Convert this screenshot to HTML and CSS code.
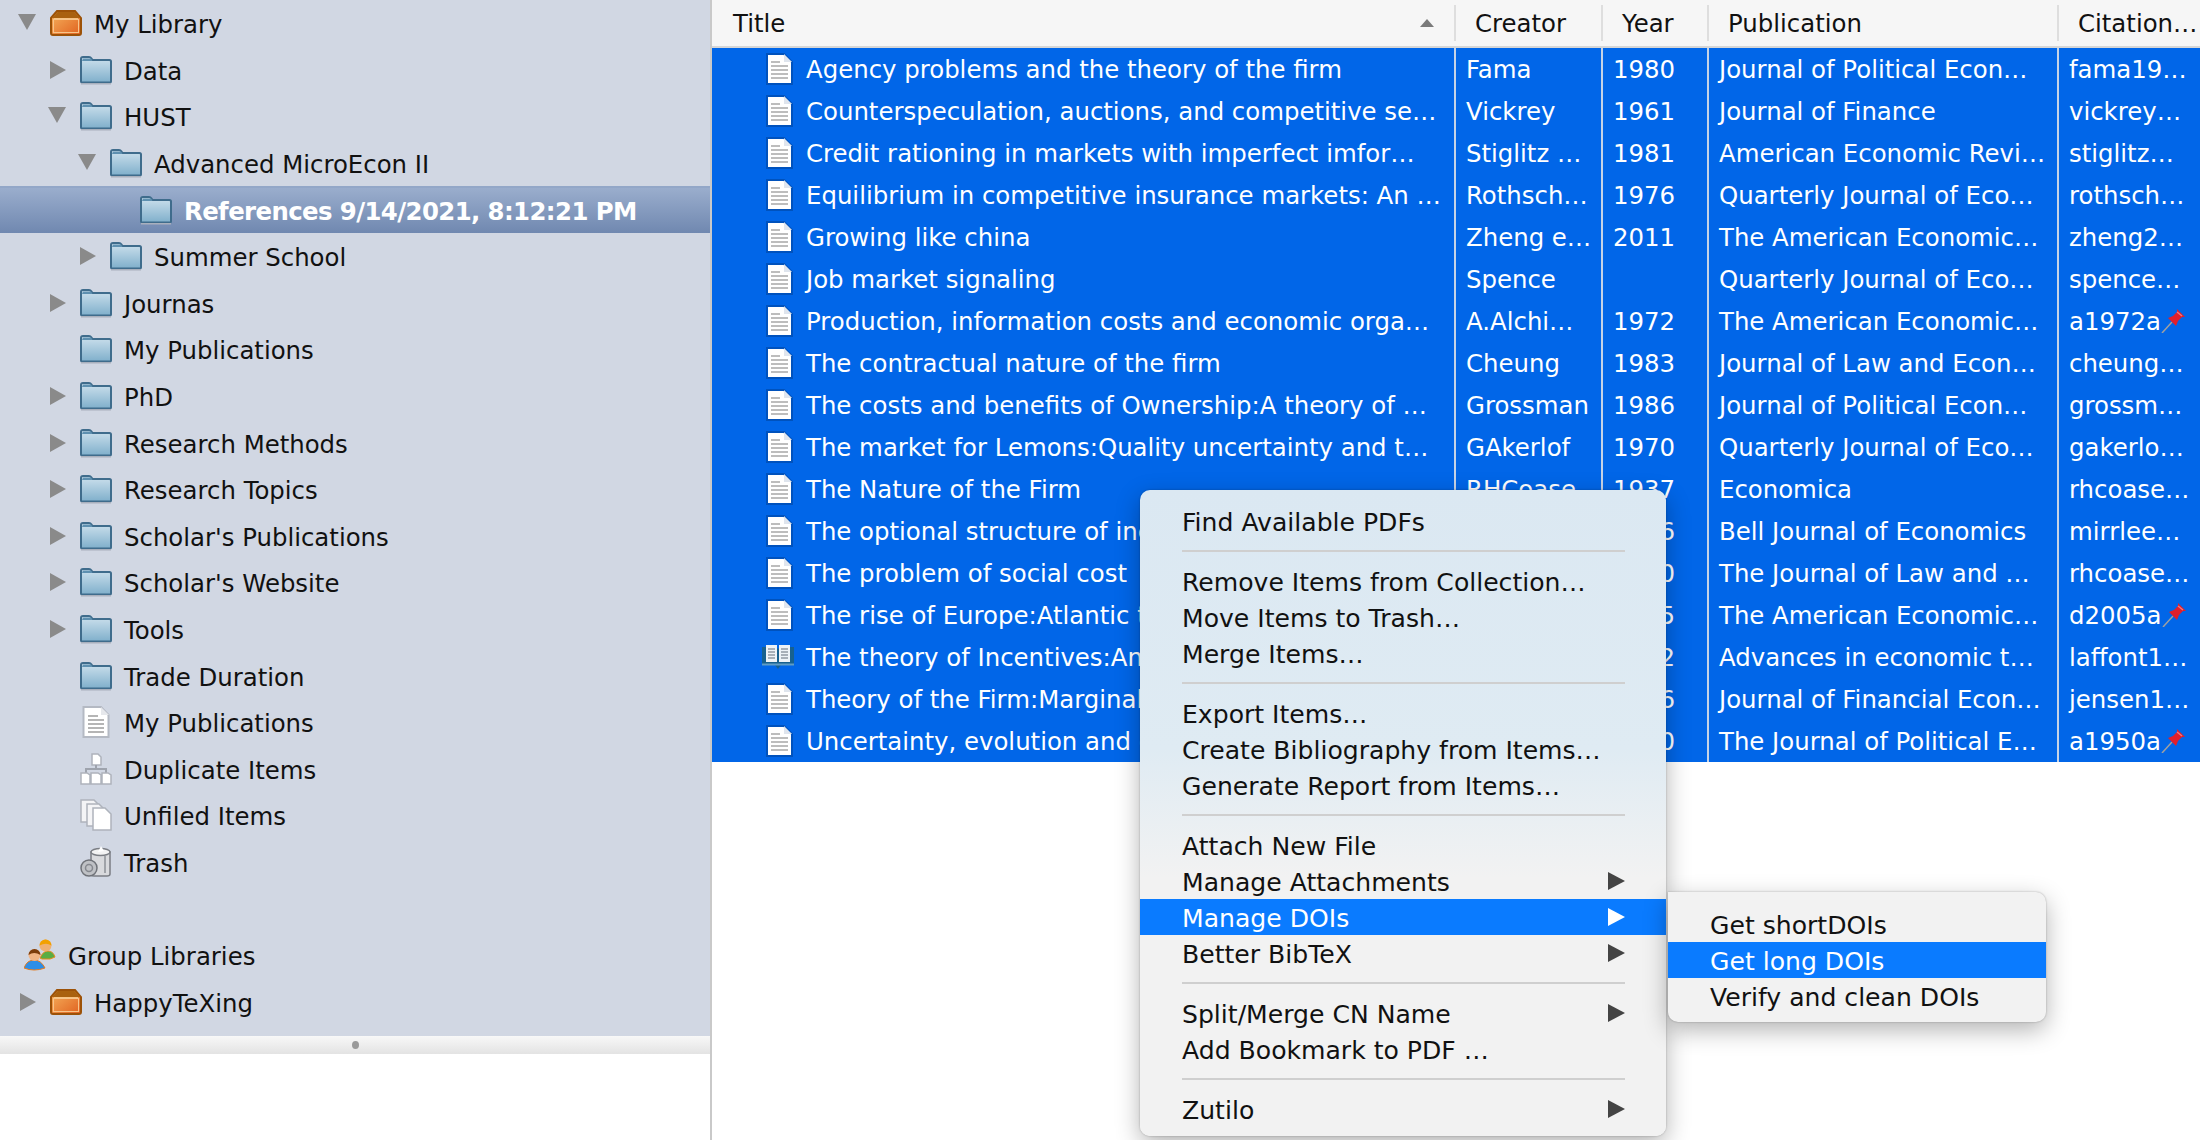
FILE: index.html
```html
<!DOCTYPE html>
<html lang="en">

<head>
    <meta charset="UTF-8">
    <title>Zotero</title>
    <link rel="stylesheet" href="styles.css">
</head>

<body>
    <!-- Shared icons -->
    <svg class="icon-defs" width="0" height="0">
        <defs>
            <linearGradient id="folder-fill" x1="0" y1="0" x2="0" y2="1">
                <stop offset="0" stop-color="#cfe2ee" />
                <stop offset="1" stop-color="#7fafcb" />
            </linearGradient>
            <linearGradient id="box-fill" x1="0" y1="0" x2="1" y2="1">
                <stop offset="0" stop-color="#f6b45f" />
                <stop offset="1" stop-color="#e0601e" />
            </linearGradient>
            <symbol id="i-folder" viewBox="0 0 32 29">
                <path d="M1 26V3.500Q1 1.500 3 1.500H9Q10.500 1.500 11.500 3L12.500 4.500H29.500Q31 4.500 31 6V26Q31 27 30 27H2Q1 27 1 26Z" fill="url(#folder-fill)" stroke="#3f6c8c" stroke-width="2" />
                <path d="M2 5.500H12.500L11 3H3Z" fill="#5e90b0" />
                <rect x="1" y="27.500" width="30" height="1.500" fill="#a9b0bd" />
            </symbol>
            <symbol id="i-box" viewBox="0 0 32 26">
                <path d="M1 8L7 1H25L31 8V23Q31 25 29 25H3Q1 25 1 23Z" fill="url(#box-fill)" stroke="#9c5208" stroke-width="2" />
                <path d="M2 8L7.500 2H24.500L30 8Z" fill="#a9610f" />
                <path d="M4 9H28" stroke="#f8d39a" stroke-width="1.500" />
                <rect x="3.500" y="9.500" width="25" height="13" fill="none" stroke="#f7c58a" stroke-width="1" />
            </symbol>
            <symbol id="i-doc" viewBox="0 0 28 32">
                <path d="M2 1H19L27 9V31H2Z" fill="#fff" stroke="#0052bd" stroke-width="2" />
                <path d="M19 1V9H27" fill="#dfe5ee" />
                <path d="M6 9H15M6 13H23M6 17H23M6 21H23M6 25H23" stroke="#bdbdbd" stroke-width="2" />
            </symbol>
            <symbol id="i-doc-plain" viewBox="0 0 28 32">
                <path d="M1.500 1H19L26.500 9V31H1.500Z" fill="#fff" stroke="#b4b9c3" stroke-width="2" />
                <path d="M19 1V9H27" fill="#e6e8ec" />
                <path d="M6 10H16M6 14H22M6 18H22M6 22H22M6 26H22" stroke="#b5b5b5" stroke-width="2" />
            </symbol>
            <symbol id="i-book" viewBox="0 0 32 26">
                <path d="M0 3H14L16 5L18 3H32V21H19L16 25L13 21H0Z" fill="#17618f" />
                <path d="M4 1H15V18H4ZM17 1H28V18H17Z" fill="#eef3f7" />
                <path d="M6 5H13M6 8H13M6 11H13M6 14H13M19 5H26M19 8H26M19 11H26M19 14H26" stroke="#a8b0b8" stroke-width="2" />
                <path d="M0 20.500H32" stroke="#5f9cc4" stroke-width="2" />
            </symbol>
            <symbol id="i-dup" viewBox="0 0 32 32">
                <path d="M12 1H18L21 4V12H12Z" fill="#fff" stroke="#aeb3bc" stroke-width="1.500" />
                <path d="M16 12V16M6 20V16H26V20" fill="none" stroke="#9ea3ad" stroke-width="2" />
                <path d="M1 20H7L10 22V31H1ZM11 20H18L21 22V31H11ZM22 20H28L31 22V31H22Z" fill="#fff" stroke="#aeb3bc" stroke-width="1.500" />
            </symbol>
            <symbol id="i-unfiled" viewBox="0 0 32 32">
                <path d="M1 1H14L19 6V23H1Z" fill="#f4f4f6" stroke="#aeb3bc" stroke-width="1.500" />
                <path d="M7 5H19L24 10V27H7Z" fill="#f4f4f6" stroke="#aeb3bc" stroke-width="1.500" />
                <path d="M13 9H25L31 15V31H13Z" fill="#fff" stroke="#aeb3bc" stroke-width="1.500" />
            </symbol>
            <symbol id="i-trash" viewBox="0 0 32 32">
                <path d="M11 6H30V28Q30 30 27 30H14Q11 30 11 28Z" fill="#d9dadd" stroke="#7b7e84" stroke-width="1.500" />
                <ellipse cx="20.500" cy="6" rx="9.500" ry="3.500" fill="#f3f3f3" stroke="#7b7e84" stroke-width="1.500" />
                <path d="M18 6L21 0L24 5Z" fill="#fff" />
                <path d="M25 10V27" stroke="#8d9096" stroke-width="1.500" />
                <circle cx="9" cy="22" r="8" fill="#bfc1c5" stroke="#6f7278" stroke-width="1.500" />
                <circle cx="9" cy="22" r="3.500" fill="none" stroke="#85888e" stroke-width="1.500" />
            </symbol>
            <symbol id="i-group" viewBox="0 0 32 32">
                <path d="M16 19Q19 12 24 12Q29 12 31 18L26 20H18Z" fill="#58ad44" stroke="#e88a1a" stroke-width="1" />
                <circle cx="21.500" cy="6.500" r="6" fill="#f0b070" />
                <path d="M15.500 6.500A6 6 0 0 1 27.500 6.500Q22 3 15.500 6.500Z" fill="#f2a100" />
                <path d="M0 29Q3 21 10 21Q17 21 21 29Q10 33 0 29Z" fill="#2d8ee6" stroke="#e87a1a" stroke-width="1" />
                <circle cx="10.500" cy="16" r="6" fill="#f1b484" />
                <path d="M4.500 16A6 6 0 0 1 16.500 16Q10 12 4.500 16Z" fill="#7c3d0c" />
            </symbol>
            <symbol id="i-pin" viewBox="0 0 24 24">
                <path d="M1 24L11 13" stroke="#a0a0a0" stroke-width="1.500" />
                <path d="M7 9L15 17L17 12L21 8L24 8L16 0L16 3L12 7Z" fill="#e01f2b" />
                <path d="M16 3L21 7" stroke="#f4777c" stroke-width="1.500" />
            </symbol>
        </defs>
    </svg>

    <div class="app">
        <aside class="sidebar">
            <div class="tree">
                <div class="tree-row"><span class="twisty twisty-open"></span><svg class="tree-icon"><use href="#i-box" /></svg><span>My Library</span></div>
                <div class="tree-row level-1"><span class="twisty"></span><svg class="tree-icon"><use href="#i-folder" /></svg><span>Data</span></div>
                <div class="tree-row level-1"><span class="twisty twisty-open"></span><svg class="tree-icon"><use href="#i-folder" /></svg><span>HUST</span></div>
                <div class="tree-row level-2"><span class="twisty twisty-open"></span><svg class="tree-icon"><use href="#i-folder" /></svg><span>Advanced MicroEcon II</span></div>
                <div class="tree-row level-3 tree-row-selected"><span class="twisty twisty-none"></span><svg class="tree-icon"><use href="#i-folder" /></svg><span>References 9/14/2021, 8:12:21 PM</span></div>
                <div class="tree-row level-2"><span class="twisty"></span><svg class="tree-icon"><use href="#i-folder" /></svg><span>Summer School</span></div>
                <div class="tree-row level-1"><span class="twisty"></span><svg class="tree-icon"><use href="#i-folder" /></svg><span>Journas</span></div>
                <div class="tree-row level-1"><span class="twisty twisty-none"></span><svg class="tree-icon"><use href="#i-folder" /></svg><span>My Publications</span></div>
                <div class="tree-row level-1"><span class="twisty"></span><svg class="tree-icon"><use href="#i-folder" /></svg><span>PhD</span></div>
                <div class="tree-row level-1"><span class="twisty"></span><svg class="tree-icon"><use href="#i-folder" /></svg><span>Research Methods</span></div>
                <div class="tree-row level-1"><span class="twisty"></span><svg class="tree-icon"><use href="#i-folder" /></svg><span>Research Topics</span></div>
                <div class="tree-row level-1"><span class="twisty"></span><svg class="tree-icon"><use href="#i-folder" /></svg><span>Scholar's Publications</span></div>
                <div class="tree-row level-1"><span class="twisty"></span><svg class="tree-icon"><use href="#i-folder" /></svg><span>Scholar's Website</span></div>
                <div class="tree-row level-1"><span class="twisty"></span><svg class="tree-icon"><use href="#i-folder" /></svg><span>Tools</span></div>
                <div class="tree-row level-1"><span class="twisty twisty-none"></span><svg class="tree-icon"><use href="#i-folder" /></svg><span>Trade Duration</span></div>
                <div class="tree-row level-1"><span class="twisty twisty-none"></span><svg class="tree-icon"><use href="#i-doc-plain" /></svg><span>My Publications</span></div>
                <div class="tree-row level-1"><span class="twisty twisty-none"></span><svg class="tree-icon"><use href="#i-dup" /></svg><span>Duplicate Items</span></div>
                <div class="tree-row level-1"><span class="twisty twisty-none"></span><svg class="tree-icon"><use href="#i-unfiled" /></svg><span>Unfiled Items</span></div>
                <div class="tree-row level-1"><span class="twisty twisty-none"></span><svg class="tree-icon"><use href="#i-trash" /></svg><span>Trash</span></div>
                <div class="tree-row tree-spacer"></div>
                <div class="tree-row group-row"><svg class="tree-icon"><use href="#i-group" /></svg><span>Group Libraries</span></div>
                <div class="tree-row"><span class="twisty"></span><svg class="tree-icon"><use href="#i-box" /></svg><span>HappyTeXing</span></div>
            </div>
            <div class="splitter"><span class="splitter-dot"></span></div>
            <div class="sidebar-blank"></div>
        </aside>

        <main class="items">
            <div class="items-head">
                <div class="head-cell head-title">Title<span class="sort-arrow"></span></div>
                <div class="head-cell">Creator</div>
                <div class="head-cell">Year</div>
                <div class="head-cell">Publication</div>
                <div class="head-cell">Citation…</div>
            </div>

            <div class="items-body">
                <div class="item"><div class="cell cell-title"><svg class="doc"><use href="#i-doc" /></svg>Agency problems and the theory of the firm</div><div class="cell">Fama</div><div class="cell">1980</div><div class="cell">Journal of Political Econ…</div><div class="cell">fama19…</div></div>
                <div class="item"><div class="cell cell-title"><svg class="doc"><use href="#i-doc" /></svg>Counterspeculation, auctions, and competitive se…</div><div class="cell">Vickrey</div><div class="cell">1961</div><div class="cell">Journal of Finance</div><div class="cell">vickrey…</div></div>
                <div class="item"><div class="cell cell-title"><svg class="doc"><use href="#i-doc" /></svg>Credit rationing in markets with imperfect imfor…</div><div class="cell">Stiglitz …</div><div class="cell">1981</div><div class="cell">American Economic Revi…</div><div class="cell">stiglitz…</div></div>
                <div class="item"><div class="cell cell-title"><svg class="doc"><use href="#i-doc" /></svg>Equilibrium in competitive insurance markets: An …</div><div class="cell">Rothsch…</div><div class="cell">1976</div><div class="cell">Quarterly Journal of Eco…</div><div class="cell">rothsch…</div></div>
                <div class="item"><div class="cell cell-title"><svg class="doc"><use href="#i-doc" /></svg>Growing like china</div><div class="cell">Zheng e…</div><div class="cell">2011</div><div class="cell">The American Economic…</div><div class="cell">zheng2…</div></div>
                <div class="item"><div class="cell cell-title"><svg class="doc"><use href="#i-doc" /></svg>Job market signaling</div><div class="cell">Spence</div><div class="cell"></div><div class="cell">Quarterly Journal of Eco…</div><div class="cell">spence…</div></div>
                <div class="item"><div class="cell cell-title"><svg class="doc"><use href="#i-doc" /></svg>Production, information costs and economic orga…</div><div class="cell">A.Alchi…</div><div class="cell">1972</div><div class="cell">The American Economic…</div><div class="cell cell-pinned">a1972a<svg class="pin"><use href="#i-pin" /></svg></div></div>
                <div class="item"><div class="cell cell-title"><svg class="doc"><use href="#i-doc" /></svg>The contractual nature of the firm</div><div class="cell">Cheung</div><div class="cell">1983</div><div class="cell">Journal of Law and Econ…</div><div class="cell">cheung…</div></div>
                <div class="item"><div class="cell cell-title"><svg class="doc"><use href="#i-doc" /></svg>The costs and benefits of Ownership:A theory of …</div><div class="cell">Grossman</div><div class="cell">1986</div><div class="cell">Journal of Political Econ…</div><div class="cell">grossm…</div></div>
                <div class="item"><div class="cell cell-title"><svg class="doc"><use href="#i-doc" /></svg>The market for Lemons:Quality uncertainty and t…</div><div class="cell">GAkerlof</div><div class="cell">1970</div><div class="cell">Quarterly Journal of Eco…</div><div class="cell">gakerlo…</div></div>
                <div class="item"><div class="cell cell-title"><svg class="doc"><use href="#i-doc" /></svg>The Nature of the Firm</div><div class="cell">RHCoase</div><div class="cell">1937</div><div class="cell">Economica</div><div class="cell">rhcoase…</div></div>
                <div class="item"><div class="cell cell-title"><svg class="doc"><use href="#i-doc" /></svg>The optional structure of income taxation</div><div class="cell">Mirrlees</div><div class="cell">1976</div><div class="cell">Bell Journal of Economics</div><div class="cell">mirrlee…</div></div>
                <div class="item"><div class="cell cell-title"><svg class="doc"><use href="#i-doc" /></svg>The problem of social cost</div><div class="cell">RHCoase</div><div class="cell">1960</div><div class="cell">The Journal of Law and …</div><div class="cell">rhcoase…</div></div>
                <div class="item"><div class="cell cell-title"><svg class="doc"><use href="#i-doc" /></svg>The rise of Europe:Atlantic trade, institutional …</div><div class="cell">D.Acem…</div><div class="cell">2005</div><div class="cell">The American Economic…</div><div class="cell cell-pinned">d2005a<svg class="pin"><use href="#i-pin" /></svg></div></div>
                <div class="item"><div class="cell cell-title"><svg class="doc doc-book"><use href="#i-book" /></svg>The theory of Incentives:An overview</div><div class="cell">Laffont</div><div class="cell">1982</div><div class="cell">Advances in economic t…</div><div class="cell">laffont1…</div></div>
                <div class="item"><div class="cell cell-title"><svg class="doc"><use href="#i-doc" /></svg>Theory of the Firm:Marginal behavior</div><div class="cell">Jensen</div><div class="cell">1976</div><div class="cell">Journal of Financial Econ…</div><div class="cell">jensen1…</div></div>
                <div class="item"><div class="cell cell-title"><svg class="doc"><use href="#i-doc" /></svg>Uncertainty, evolution and economic theory</div><div class="cell">AAlchian</div><div class="cell">1950</div><div class="cell">The Journal of Political E…</div><div class="cell cell-pinned">a1950a<svg class="pin"><use href="#i-pin" /></svg></div></div>
            </div>
        </main>
    </div>

    <!-- Context menu -->
    <div class="menu context-menu">
        <div class="menu-item">Find Available PDFs</div>
        <div class="menu-sep"></div>
        <div class="menu-item">Remove Items from Collection…</div>
        <div class="menu-item">Move Items to Trash…</div>
        <div class="menu-item">Merge Items…</div>
        <div class="menu-sep"></div>
        <div class="menu-item">Export Items…</div>
        <div class="menu-item">Create Bibliography from Items…</div>
        <div class="menu-item">Generate Report from Items…</div>
        <div class="menu-sep"></div>
        <div class="menu-item">Attach New File</div>
        <div class="menu-item has-sub">Manage Attachments</div>
        <div class="menu-item has-sub menu-item-active">Manage DOIs</div>
        <div class="menu-item has-sub">Better BibTeX</div>
        <div class="menu-sep"></div>
        <div class="menu-item has-sub">Split/Merge CN Name</div>
        <div class="menu-item">Add Bookmark to PDF …</div>
        <div class="menu-sep"></div>
        <div class="menu-item has-sub">Zutilo</div>
    </div>

    <div class="menu sub-menu">
        <div class="menu-item">Get shortDOIs</div>
        <div class="menu-item menu-item-active">Get long DOIs</div>
        <div class="menu-item">Verify and clean DOIs</div>
    </div>
</body>

</html>
```
FILE: styles.css
```css
* {
    box-sizing: border-box;
}

body {
    margin: 0;
    background-color: #fff;
    color: #111;
    font-family: "DejaVu Sans", sans-serif;
    font-size: 24.4px;
    overflow: hidden;
}

.icon-defs {
    position: absolute;
}

.app {
    display: flex;
    height: 1140px;
}

/* Left collection tree */
.sidebar {
    display: flex;
    flex-direction: column;
    width: 712px;
    border-right: 2px solid #c9c9c9;
}

.tree {
    height: 1036px;
    background-color: #d1d7e3;
}

.tree-row {
    display: flex;
    align-items: center;
    height: 46.6px;
    padding-left: 18px;
    white-space: nowrap;
}

.tree-row > span:last-child {
    padding-top: 3px;
}

.level-1 {
    padding-left: 48px;
}

.level-2 {
    padding-left: 78px;
}

.level-3 {
    padding-left: 108px;
}

.group-row {
    padding-left: 24px;
}

.tree-row-selected {
    background: linear-gradient(#9cafce, #7088b0);
    box-shadow: inset 0 2px 0 #93a7c8;
    color: #fff;
    font-weight: bold;
    letter-spacing: -0.6px;
}

.twisty {
    flex: none;
    width: 0;
    height: 0;
    margin-left: 2px;
    margin-right: 14px;
    border-top: 9px solid transparent;
    border-bottom: 9px solid transparent;
    border-left: 16px solid #8a8a8a;
}

.twisty-open {
    margin-left: 0;
    margin-right: 14px;
    border-left: 9px solid transparent;
    border-right: 9px solid transparent;
    border-top: 16px solid #8a8a8a;
    border-bottom: 0;
    transform: translateY(-1px);
}

.twisty-none {
    border-color: transparent;
}

.tree-icon {
    flex: none;
    width: 32px;
    height: 32px;
    margin-right: 12px;
}

.splitter {
    display: flex;
    align-items: center;
    justify-content: center;
    height: 18px;
    background: linear-gradient(#f8f8f8, #e3e3e3);
}

.splitter-dot {
    width: 7px;
    height: 8px;
    border-radius: 50%;
    background-color: #9a9a9a;
}

.sidebar-blank {
    flex: 1;
    background-color: #fff;
}

/* Items table */
.items {
    flex: 1;
    min-width: 0;
}

.items-head,
.item {
    display: grid;
    grid-template-columns: 744px 147px 106px 350px 141px;
}

.items-head {
    height: 48px;
    padding-top: 5px;
    background-color: #f6f6f6;
    border-bottom: 2px solid #d6d6d6;
}

.head-cell {
    position: relative;
    height: 36px;
    padding-left: 19px;
    border-right: 2px solid #dedede;
    line-height: 38px;
    white-space: nowrap;
    overflow: hidden;
}

.head-cell:last-child {
    border-right: none;
}

.head-title {
    padding-left: 21px;
}

.sort-arrow {
    position: absolute;
    right: 20px;
    top: 14px;
    width: 0;
    height: 0;
    border-left: 7px solid transparent;
    border-right: 7px solid transparent;
    border-bottom: 8px solid #7a7a7a;
}

.items-body {
    background-color: #0166e8;
    color: #fff;
}

.item {
    height: 42px;
}

.cell {
    display: flex;
    align-items: center;
    padding-top: 1px;
    padding-left: 10px;
    border-right: 2px solid #c6d3e6;
    white-space: nowrap;
    overflow: hidden;
}

.cell:last-child {
    border-right: none;
}

.cell-title {
    padding-left: 53px;
}

.doc {
    flex: none;
    width: 28px;
    height: 32px;
    margin-top: -1px;
    margin-right: 13px;
}

.doc-book {
    width: 32px;
    margin-left: -3px;
    margin-right: 12px;
}

.pin {
    flex: none;
    width: 24px;
    height: 24px;
    margin-top: -1px;
}

/* Popup menus */
.menu {
    position: absolute;
    background-color: #f2f2f2;
    box-shadow: 0 8px 24px rgba(0, 0, 0, 0.3), 0 0 2px rgba(0, 0, 0, 0.3);
    color: #111;
    font-size: 25.1px;
}

.context-menu {
    left: 1140px;
    top: 490px;
    width: 526px;
    height: 646px;
    padding: 13px 0 9px;
    border-radius: 10px;
    background: linear-gradient(#dbe8f2, #dfebf3 40%, #f2f2f2 60%);
}

.sub-menu {
    left: 1668px;
    top: 892px;
    width: 378px;
    height: 130px;
    padding: 14px 0 8px;
    border-radius: 0 10px 10px 10px;
}

.menu-item {
    position: relative;
    height: 36px;
    padding-left: 42px;
    line-height: 39px;
    white-space: nowrap;
}

.menu-item-active {
    background-color: #0a7bff;
    color: #fff;
}

.has-sub::after {
    content: "";
    position: absolute;
    right: 41px;
    top: 9px;
    border-top: 9px solid transparent;
    border-bottom: 9px solid transparent;
    border-left: 17px solid #444;
}

.menu-item-active.has-sub::after {
    border-left-color: #fff;
}

.menu-sep {
    height: 2px;
    margin: 11px 41px 11px 42px;
    background-color: #cfcfcf;
}
```
